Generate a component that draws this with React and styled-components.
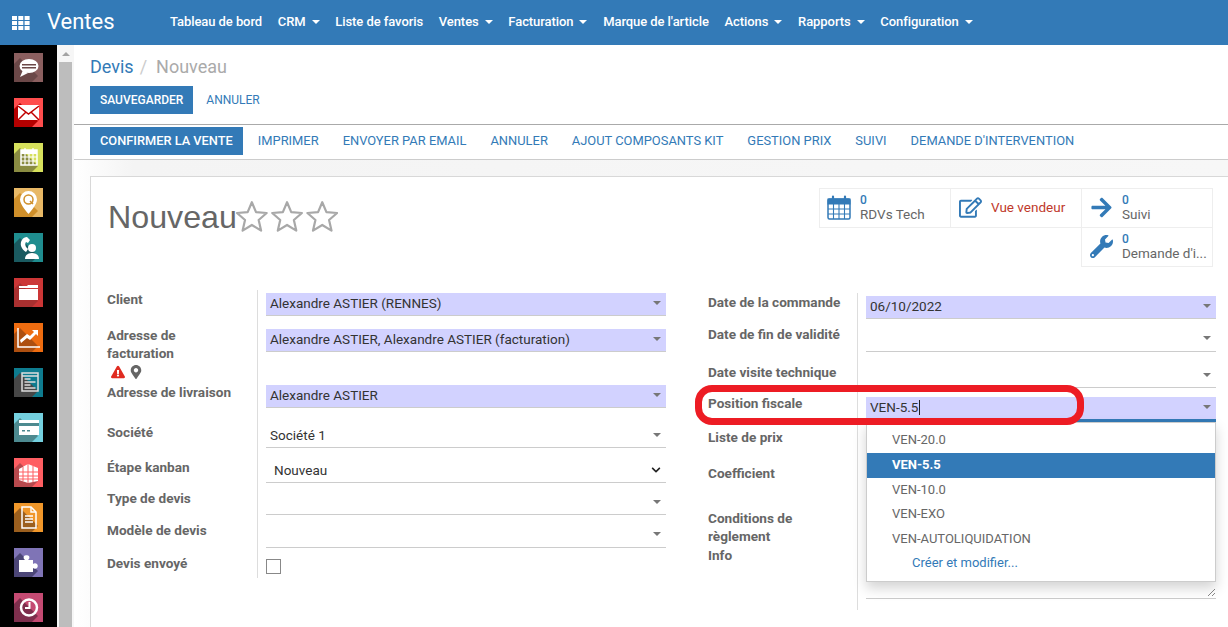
import React from "react";
import styled, { createGlobalStyle } from "styled-components";
import { FaRegEdit, FaArrowRight, FaWrench, FaExclamationTriangle, FaMapMarkerAlt, FaChevronDown } from "react-icons/fa";

const Global = createGlobalStyle`
    html,body{margin:0;padding:0;height:627px;overflow:hidden;background:#fff;}
    body{font-family:Roboto,"Liberation Sans",sans-serif;font-size:13px;color:#4c4c4c;}
    *{box-sizing:border-box;}
`;

const Page = styled.div`width:1228px;height:627px;overflow:hidden;display:flex;flex-direction:column;`;
const Navbar = styled.header`height:45px;flex:none;background:#337ab7;color:#fff;display:flex;align-items:center;padding-bottom:2px;`;
const AppsIcon = styled.svg`width:18px;height:14px;margin:2px 0 0 12px;fill:#fff;flex:none;`;
const Brand = styled.div`font-size:22px;margin-left:17px;width:123px;flex:none;`;
const Menu = styled.nav`display:flex;column-gap:15.7px;font-size:13px;font-weight:500;letter-spacing:-.07px;`;
const MenuItem = styled.span`display:flex;align-items:center;white-space:nowrap;`;
const Caret = styled.i`
    display:inline-block;width:0;height:0;margin-left:${p => p.$gap || 6}px;flex:none;
    border-top:4px solid ${p => p.$color || "#fff"};border-left:4px solid transparent;border-right:4px solid transparent;
`;

const Body = styled.div`flex:1;display:flex;min-height:0;`;
const Dock = styled.aside`width:57px;flex:none;background:#000;display:flex;flex-direction:column;align-items:center;row-gap:16px;padding:8px 1px 0 0;overflow:hidden;`;
const Tile = styled.svg`width:29px;height:29px;flex:none;display:block;`;
const Scroll = styled.div`width:17px;flex:none;background:#f6f6f6;padding:0 2px;display:flex;flex-direction:column;`;
const ScrollUp = styled.div`height:17px;display:flex;align-items:center;justify-content:center;
    &:before{content:"";border-bottom:4px solid #a3a3a3;border-left:4px solid transparent;border-right:4px solid transparent;}
`;
const ScrollThumb = styled.div`flex:1;background:#bdbdbd;`;
const Main = styled.main`flex:1;min-width:0;display:flex;flex-direction:column;`;

const ControlPanel = styled.div`height:80px;flex:none;padding:9px 0 0 16px;border-bottom:1px solid #aaa;background:#fff;`;
const Crumbs = styled.div`font-size:18px;line-height:26px;height:32px;color:#aaa;white-space:nowrap;`;
const CrumbLink = styled.span`color:#337ab7;`;
const CrumbSep = styled.span`color:#ccc;margin:0 9px 0 6px;`;
const Buttons = styled.div`display:flex;align-items:center;`;
const Primary = styled.div`height:28px;padding:0 10px;background:#337ab7;color:#fff;font-size:${p => p.$size || 12}px;font-weight:500;line-height:28px;text-transform:uppercase;white-space:nowrap;`;
const LinkBtn = styled.div`color:#337ab7;font-size:${p => p.$size || 12}px;line-height:28px;text-transform:uppercase;white-space:nowrap;margin-left:${p => p.$ml}px;`;
const StatusBar = styled.div`height:35px;flex:none;padding:2px 0 0 16px;border-bottom:1px solid #ccc;background:#fff;`;

const FormBg = styled.div`flex:1;min-height:0;padding:16px 0 0 16px;background:linear-gradient(to right,#fff,#f4f4f4 60px,#f7f7f7);`;
const Sheet = styled.section`height:600px;width:1160px;background:#fff;border:1px solid #d8d8d8;border-right:0;padding:11px 0 0 16px;`;
const SheetHead = styled.div`height:102px;display:flex;justify-content:space-between;align-items:flex-start;padding-right:37px;`;
const Title = styled.div`display:flex;align-items:center;height:58px;margin-left:1px;font-family:"Liberation Sans",sans-serif;font-size:32.2px;color:#666;`;
const Stars = styled.svg`width:103px;height:33px;margin:-2px 0 0 -2px;fill:none;stroke:#a8a8a8;stroke-width:2;stroke-linejoin:round;`;
const BoxGrid = styled.div`display:grid;grid-template-columns:repeat(3,131px);grid-auto-rows:39px;width:394px;`;
const StatBox = styled.div`
    grid-column:${p => p.$col || "auto"};display:flex;align-items:center;padding:0 0 2px 7px;column-gap:9px;
    border:1px solid #eee;margin:0 -1px -1px 0;color:#666;font-size:13.5px;line-height:14px;white-space:nowrap;
`;
const StatIcon = styled.div`width:24px;flex:none;display:flex;justify-content:center;color:#337ab7;font-size:23px;`;
const StatNum = styled.div`color:#337ab7;font-size:12px;font-weight:500;line-height:13px;`;
const StatRed = styled.div`color:#c0392b;font-size:13.5px;`;

const FormGrid = styled.div`display:flex;align-items:flex-start;`;
const Group = styled.div`width:${p => p.$w}px;flex:none;margin:${p => p.$mt || 0}px 0 0 ${p => p.$ml || 0}px;`;
const Row = styled.div`display:grid;grid-template-columns:150px 1fr;height:${p => p.$h}px;position:relative;`;
const Label = styled.div`font-weight:700;font-size:13.6px;line-height:18px;color:#666;padding-left:${p => p.$pl || 0}px;max-width:${p => p.$max || 150}px;`;
const LabelIcons = styled.div`display:flex;align-items:center;column-gap:4px;padding-left:4px;font-size:14px;height:20px;color:#666;`;
const Cell = styled.div`border-left:1px solid #ddd;padding:${p => p.$top || 0}px 0 0 8px;position:relative;`;
const Field = styled.div`
    height:${p => p.$h || 24}px;display:flex;align-items:center;justify-content:space-between;padding:0 5px 2px ${p => p.$pl || 4}px;
    background:${p => p.$filled ? "#d2d2ff" : "transparent"};
    border-bottom:${p => p.$focus ? "3px solid #337ab7" : "1px solid #ccc"};
    color:#333;font-size:13.5px;white-space:nowrap;position:relative;
`;
const Cursor = styled.span`display:inline-block;width:1px;height:15px;background:#222;margin-left:1px;vertical-align:-3px;`;
const Check = styled.div`width:15px;height:15px;border:1px solid #888;background:#fff;`;
const Chevron = styled.span`display:flex;font-size:10px;color:#222;`;
const Resize = styled.svg`position:absolute;right:0;bottom:1px;width:9px;height:9px;stroke:#888;stroke-width:1;`;

const Ring = styled.div`position:absolute;left:-12px;top:-9px;width:389px;height:40px;border:7px solid #ed1c24;border-radius:17px;z-index:5;pointer-events:none;`;
const Dropdown = styled.ul`
    position:absolute;left:8px;top:28px;width:350px;height:160px;margin:0;padding:5px 0 0;list-style:none;
    background:#fff;border:1px solid #ccc;box-shadow:0 6px 12px rgba(0,0,0,.175);z-index:4;
`;
const Option = styled.li`
    height:24.8px;line-height:24.8px;font-size:13px;
    margin-top:${p => p.$link ? -1 : 0}px;
    padding-left:${p => p.$link ? 45 : 25}px;
    background:${p => p.$active ? "#337ab7" : "transparent"};
    color:${p => p.$active ? "#fff" : p.$link ? "#337ab7" : "#666"};
    font-weight:${p => p.$active ? 700 : 400};
`;

const menu = [["Tableau de bord"], ["CRM", 1], ["Liste de favoris"], ["Ventes", 1], ["Facturation", 1], ["Marque de l'article"], ["Actions", 1], ["Rapports", 1], ["Configuration", 1]];
const actions = [["IMPRIMER", 15], ["ENVOYER PAR EMAIL", 24], ["ANNULER", 24], ["AJOUT COMPOSANTS KIT", 24], ["GESTION PRIX", 24], ["SUIVI", 24], ["DEMANDE D'INTERVENTION", 24]];

const W = { fill: "#fff" };
const tiles = [
    ["#8b5f5f", "#6b4848", <g key="g"><ellipse cx="15" cy="13" rx="9.5" ry="7" {...W} /><path d="M9 17l-3 7 8-4z" {...W} /><rect x="8" y="11" width="14" height="1.5" fill="#6b4848" /><rect x="8" y="14" width="14" height="1.5" fill="#6b4848" /></g>],
    ["#ff4d4d", "#b40000", <g key="g"><rect x="4" y="7" width="21" height="15" {...W} /><path d="M4 8l10.5 8L25 8M4 22l8-8M25 22l-8-8" fill="none" stroke="#c00000" strokeWidth="1.5" /></g>],
    ["#d6e05c", "#8a8c42", <g key="g"><rect x="7" y="7" width="16" height="15" fill="none" stroke="#fff" strokeWidth="1.5" /><rect x="7" y="7" width="16" height="4" {...W} /><path d="M11 5v4M19 5v4M7 14h16M7 18h16M11 11v11M15 11v11M19 11v11" stroke="#fff" strokeWidth="1.2" /></g>],
    ["#e8b866", "#cf8f2a", <g key="g"><path d="M14.5 3a8.5 8.5 0 0 1 8.5 8.5C23 17 14.5 26 14.5 26S6 17 6 11.5A8.5 8.5 0 0 1 14.5 3z" {...W} /><circle cx="14.5" cy="11.5" r="4.5" fill="none" stroke="#cf8f2a" strokeWidth="1.5" /><path d="M16 13l3 3" stroke="#cf8f2a" strokeWidth="1.5" /></g>],
    ["#1f8d8f", "#1a5a60", <g key="g"><path d="M13 4c-4 0-7 4-6 9 1 3 3 5 5 6l2-3-2-2c-1-2-1-4 0-5l2 1 2-3z" {...W} /><circle cx="18" cy="15" r="4" {...W} /><path d="M11 26c0-4 3-6 7-6s7 2 7 6z" {...W} /></g>],
    ["#cc3636", "#a93030", <g key="g"><path d="M5 8h8l1-1h10v3H5z" {...W} /><rect x="5" y="11" width="19" height="11" {...W} /></g>],
    ["#ee6c10", "#ad4f10", <g key="g"><path d="M4 5v19h22" fill="none" stroke="#fff" strokeWidth="1.5" /><path d="M7 20l6-5 3 2 6-6 2 2V7h-6l2 2-4 4-3-2-7 6z" {...W} /></g>],
    ["#0e7c8f", "#474747", <g key="g"><rect x="8" y="5" width="16" height="18" fill="none" stroke="#ddd" strokeWidth="1.5" /><path d="M8 8h16M10.5 11h6M10.5 14h11M10.5 17h6M10.5 20h11" stroke="#ddd" strokeWidth="1.4" /></g>],
    ["#74d0df", "#4d8a90", <g key="g"><rect x="5" y="7" width="20" height="15" {...W} /><rect x="5" y="10" width="20" height="3" fill="#4d8a90" /><rect x="8" y="17" width="3" height="1.5" fill="#4d8a90" /><rect x="13" y="17" width="3" height="1.5" fill="#4d8a90" /></g>],
    ["#ff5e62", "#b84a4e", <g key="g"><path d="M5 11l9-5 10 4v13l-10 2-9-3z" {...W} /><path d="M9 9v14M14 6v19M19 8v16M5 14h19M5 18h19M5 21h19" stroke="#ff5e62" strokeWidth="1" /></g>],
    ["#f0972a", "#9b5f1e", <g key="g"><path d="M8 4h9l5 5v16H8z" fill="none" stroke="#fff" strokeWidth="1.5" /><path d="M17 4v5h5M11 13h8M11 16h8M11 19h8" fill="none" stroke="#fff" strokeWidth="1.4" /></g>],
    ["#7f74b6", "#4c4677", <g key="g"><path d="M5 12h6c-1-1-2-2-1-4 1-1 4-1 5 0 1 2 0 3-1 4h5v4c1-1 3-1 4 0s1 3 0 4-3 1-4 0v4H5z" {...W} /></g>],
    ["#c44a72", "#7e2f4d", <g key="g"><circle cx="15" cy="14.5" r="8" fill="none" stroke="#fff" strokeWidth="2.5" /><path d="M15.5 9v6H11" fill="none" stroke="#fff" strokeWidth="2" /></g>],
];

const left = [
    { h: 36, label: "Client", top: 3, field: { h: 23, filled: true }, value: "Alexandre ASTIER (RENNES)" },
    { h: 57, label: "Adresse de facturation", top: 3, icons: true, field: { h: 23, filled: true }, value: "Alexandre ASTIER, Alexandre ASTIER (facturation)" },
    { h: 40, label: "Adresse de livraison", top: 2, field: { h: 23, filled: true }, value: "Alexandre ASTIER" },
    { h: 35, label: "Société", top: 1, field: { h: 24 }, value: "Société 1" },
    { h: 31, label: "Étape kanban", top: 1, field: { h: 24, pl: 8 }, value: "Nouveau", select: true },
    { h: 32, label: "Type de devis", top: 2, field: { h: 24 } },
    { h: 33, label: "Modèle de devis", top: 2, field: { h: 25 } },
    { h: 24, label: "Devis envoyé", top: 5, check: true },
];

const right = [
    { h: 32, label: "Date de la commande", top: 3, field: { h: 23, filled: true }, value: "06/10/2022" },
    { h: 38, label: "Date de fin de validité", top: 2, field: { h: 25 } },
    { h: 31, label: "Date visite technique", top: 1, field: { h: 24 } },
    { h: 34, label: "Position fiscale", top: 3, focus: true },
    { h: 36, label: "Liste de prix" },
    { h: 45, label: "Coefficient" },
    { h: 37, label: "Conditions de règlement" },
    { h: 64, label: "Info", area: true },
];

const options = ["VEN-20.0", "VEN-5.5", "VEN-10.0", "VEN-EXO", "VEN-AUTOLIQUIDATION"];

const CalendarIcon = () => (
    <svg width="24" height="25" viewBox="0 0 24 25" fill="none" stroke="#337ab7">
        <rect x="1" y="4" width="22" height="20" rx="1.5" strokeWidth="1.5" />
        <rect x="1" y="4" width="22" height="5" fill="#337ab7" strokeWidth="1" />
        <path d="M6 1.5v5M18 1.5v5" strokeWidth="2.2" strokeLinecap="round" />
        <path d="M1 14h22M1 19h22M6.5 9v15M12 9v15M17.5 9v15" strokeWidth="1.1" />
    </svg>
);

const FormRow = ({ row, labelMax, labelPl }) => (
    <Row $h={row.h}>
        <Label $max={labelMax} $pl={labelPl}>
            {row.label}
            {row.icons && (
                <LabelIcons>
                    <FaExclamationTriangle color="#e02b20" />
                    <FaMapMarkerAlt color="#666" />
                </LabelIcons>
            )}
        </Label>
        <Cell $top={row.top}>
            {row.field && (
                <Field $h={row.field.h} $filled={row.field.filled} $pl={row.field.pl}>
                    <span>{row.value}</span>
                    {row.select ? <Chevron><FaChevronDown /></Chevron> : <Caret $color="#777" />}
                </Field>
            )}
            {row.check && <Check />}
            {row.focus && (
                <>
                    <Field $h={25} $filled $focus>
                        <span>VEN-5.5<Cursor /></span>
                        <Caret $color="#777" />
                    </Field>
                    <Dropdown>
                        {options.map(o => <Option key={o} $active={o === "VEN-5.5"}>{o}</Option>)}
                        <Option $link>Créer et modifier...</Option>
                    </Dropdown>
                </>
            )}
            {row.area && (
                <Field $h={53}>
                    <Resize viewBox="0 0 9 9"><path d="M1 8l7-7M5 8l3-3" /></Resize>
                </Field>
            )}
        </Cell>
        {row.focus && <Ring />}
    </Row>
);

export default function App() {
    return (
        <Page>
            <Global />
            <Navbar>
                <AppsIcon viewBox="0 0 18 14">
                    {[0, 5, 10].map(y => [0, 6.3, 12.6].map(x => <rect key={`${x}-${y}`} x={x} y={y} width="5" height="4" />))}
                </AppsIcon>
                <Brand>Ventes</Brand>
                <Menu>
                    {menu.map(([name, drop]) => (
                        <MenuItem key={name}>{name}{drop && <Caret />}</MenuItem>
                    ))}
                </Menu>
            </Navbar>
            <Body>
                <Dock>
                    {tiles.map(([bg, shade, glyph], i) => (
                        <Tile key={i} viewBox="0 0 29 29">
                            <rect width="29" height="29" fill={bg} />
                            <path d="M6 5L24 23L18 29H0V11Z" fill={shade} />
                            {glyph}
                        </Tile>
                    ))}
                </Dock>
                <Scroll>
                    <ScrollUp />
                    <ScrollThumb />
                </Scroll>
                <Main>
                    <ControlPanel>
                        <Crumbs><CrumbLink>Devis</CrumbLink><CrumbSep>/</CrumbSep>Nouveau</Crumbs>
                        <Buttons>
                            <Primary>Sauvegarder</Primary>
                            <LinkBtn $ml={13}>Annuler</LinkBtn>
                        </Buttons>
                    </ControlPanel>
                    <StatusBar>
                        <Buttons>
                            <Primary $size={12.8}>Confirmer la vente</Primary>
                            {actions.map(([name, ml]) => <LinkBtn key={name} $ml={ml} $size={12.9}>{name}</LinkBtn>)}
                        </Buttons>
                    </StatusBar>
                    <FormBg>
                        <Sheet>
                            <SheetHead>
                                <Title>
                                    Nouveau
                                    <Stars viewBox="0 0 93 30">
                                        {[0, 32, 64].map(x => (
                                            <polygon key={x} transform={`translate(${x} 0)`} points="15,2 18.8,11 28.5,11.8 21.2,18.2 23.4,27.8 15,22.7 6.6,27.8 8.8,18.2 1.5,11.8 11.2,11" />
                                        ))}
                                    </Stars>
                                </Title>
                                <BoxGrid>
                                    <StatBox>
                                        <StatIcon><CalendarIcon /></StatIcon>
                                        <div><StatNum>0</StatNum>RDVs Tech</div>
                                    </StatBox>
                                    <StatBox>
                                        <StatIcon><FaRegEdit /></StatIcon>
                                        <StatRed>Vue vendeur</StatRed>
                                    </StatBox>
                                    <StatBox>
                                        <StatIcon><FaArrowRight /></StatIcon>
                                        <div><StatNum>0</StatNum>Suivi</div>
                                    </StatBox>
                                    <StatBox $col="3">
                                        <StatIcon><FaWrench /></StatIcon>
                                        <div><StatNum>0</StatNum>Demande d'i...</div>
                                    </StatBox>
                                </BoxGrid>
                            </SheetHead>
                            <FormGrid>
                                <Group $w={559}>{left.map(r => <FormRow key={r.label} row={r} labelMax={135} />)}</Group>
                                <Group $w={509} $ml={41} $mt={3}>{right.map(r => <FormRow key={r.label} row={r} labelMax={150} labelPl={1} />)}</Group>
                            </FormGrid>
                        </Sheet>
                    </FormBg>
                </Main>
            </Body>
        </Page>
    );
}
